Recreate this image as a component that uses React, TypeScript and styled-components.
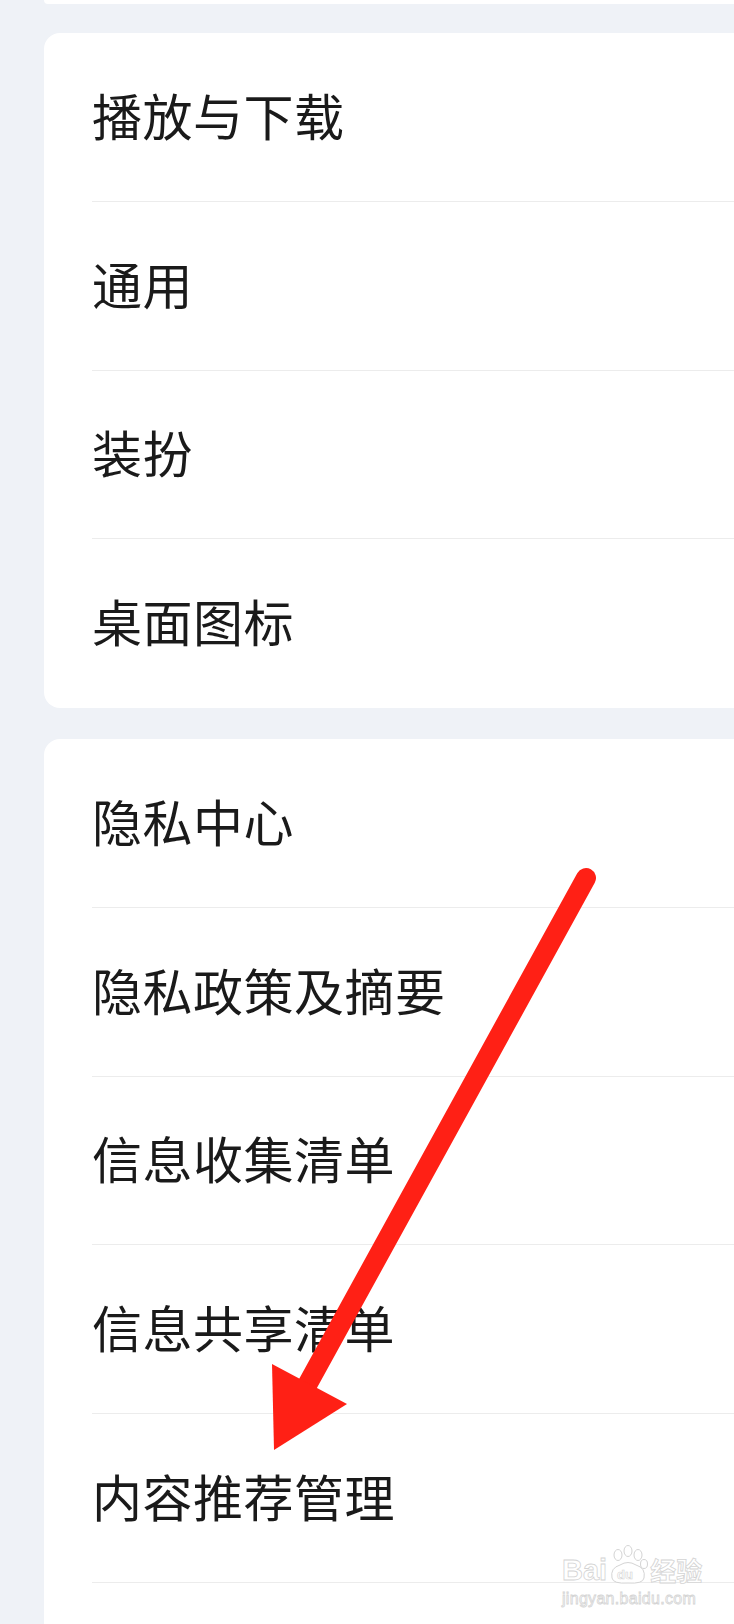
import styled, { createGlobalStyle } from "styled-components";

const GlobalStyle = createGlobalStyle`
  html, body {
    margin: 0;
    padding: 0;
    background: #eff2f7;
  }
  * {
    box-sizing: border-box;
  }
`;

const Page = styled.div`
  position: relative;
  width: 734px;
  height: 1624px;
  overflow: hidden;
  background: #eff2f7;
  font-family: "Noto Sans CJK SC", "Noto Sans", sans-serif;
`;

const CardStub = styled.div`
  margin-left: 44px;
  width: 720px;
  height: 4px;
  background: #ffffff;
  border-radius: 0 0 0 4px;
`;

const Card = styled.div<{ $gap: number }>`
  margin-top: ${(p) => p.$gap}px;
  margin-left: 44px;
  width: 720px;
  background: #ffffff;
  border-radius: 16px 0 0 16px;
  overflow: hidden;
`;

const Row = styled.div`
  position: relative;
  height: 168.75px;
  display: flex;
  align-items: center;
  padding-left: 48px;
  padding-bottom: 7px;
  font-size: 50px;
  line-height: 1;
  color: #1a1a1a;
  letter-spacing: 0.5px;

  &:not(:last-child)::after {
    content: "";
    position: absolute;
    left: 48px;
    right: 0;
    bottom: 0;
    height: 1px;
    background: #ececec;
  }
`;

const Overlay = styled.svg`
  position: absolute;
  left: 0;
  top: 0;
  pointer-events: none;
`;

const Watermark = styled.div`
  position: absolute;
  left: 562px;
  top: 1545px;
  display: flex;
  flex-direction: column;
  align-items: flex-start;
  color: #ffffff;
  -webkit-text-stroke: 0.8px #d4d4d4;
  font-family: "Liberation Sans", "Noto Sans CJK SC", sans-serif;
`;

const MarkTop = styled.div`
  display: flex;
  align-items: flex-end;
  font-size: 29px;
  font-weight: 700;
  line-height: 1;
`;

const MarkCn = styled.span`
  font-size: 26px;
  margin-left: 1px;
`;

const MarkSub = styled.div`
  font-size: 16px;
  margin-top: 5px;
  letter-spacing: 0.3px;
`;

const groups = [
  ["播放与下载", "通用", "装扮", "桌面图标"],
  ["隐私中心", "隐私政策及摘要", "信息收集清单", "信息共享清单", "内容推荐管理", ""],
];

const Paw = () => (
  <svg width="42" height="40" viewBox="0 0 42 40" fill="#fff" stroke="#d4d4d4" strokeWidth="1">
    <ellipse cx="11" cy="10" rx="4" ry="5.5" />
    <ellipse cx="21" cy="6" rx="4" ry="5.5" />
    <ellipse cx="31" cy="10" rx="4" ry="5.5" />
    <ellipse cx="37" cy="19" rx="3.5" ry="4.5" />
    <path d="M5 33 Q3 23 13 20 Q21 15 29 20 Q39 23 37 33 Q36 39 21 38 Q6 39 5 33 Z" />
    <text x="10" y="34" fontSize="13" fontFamily="Liberation Sans" fontWeight="700" fill="#fff" stroke="#d4d4d4" strokeWidth="0.6">du</text>
  </svg>
);

export default function App() {
  return (
    <>
      <GlobalStyle />
      <Page>
        <CardStub />
        {groups.map((items, gi) => (
          <Card key={gi} $gap={gi === 0 ? 29 : 31}>
            {items.map((label, i) => (
              <Row key={i}>{label}</Row>
            ))}
          </Card>
        ))}
        <Overlay width="734" height="1624" viewBox="0 0 734 1624">
          <line x1="586" y1="878" x2="300" y2="1398" stroke="#ff2015" strokeWidth="20" strokeLinecap="round" />
          <polygon points="272,1364 347,1404 274,1450" fill="#ff2015" />
        </Overlay>
        <Watermark>
          <MarkTop>
            <span>Bai</span>
            <Paw />
            <MarkCn>经验</MarkCn>
          </MarkTop>
          <MarkSub>jingyan.baidu.com</MarkSub>
        </Watermark>
      </Page>
    </>
  );
}
